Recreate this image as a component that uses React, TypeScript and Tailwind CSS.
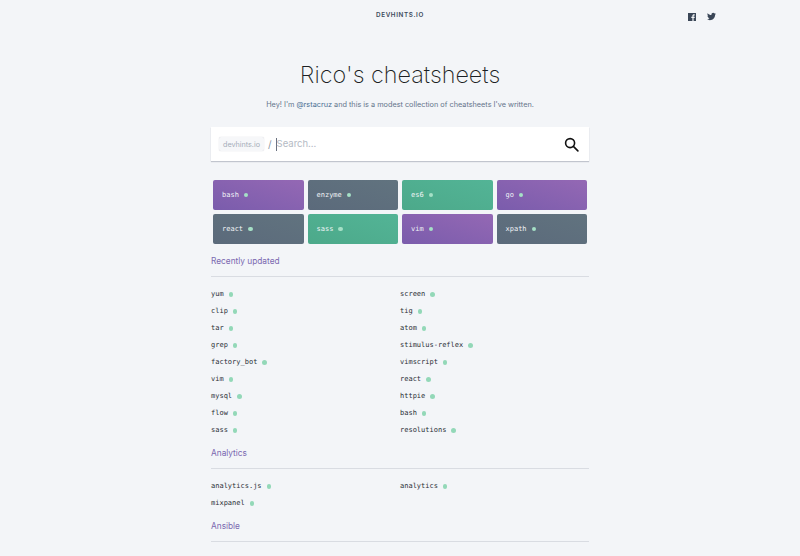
import { FaTwitter } from "react-icons/fa";

const inter = "font-['Inter',sans-serif]";
const mono = "font-['DejaVu_Sans_Mono',monospace]";

const tiles: [string, string][] = [
  ["bash", "bg-gradient-to-tr from-[#7a5cac] to-[#9468b4]"],
  ["enzyme", "bg-gradient-to-tr from-[#5b6a7b] to-[#61737f]"],
  ["es6", "bg-gradient-to-tr from-[#4ca98a] to-[#53b496]"],
  ["go", "bg-gradient-to-tr from-[#7a5cac] to-[#9468b4]"],
  ["react", "bg-gradient-to-tr from-[#5b6a7b] to-[#61737f]"],
  ["sass", "bg-gradient-to-tr from-[#4ca98a] to-[#53b496]"],
  ["vim", "bg-gradient-to-tr from-[#7a5cac] to-[#9468b4]"],
  ["xpath", "bg-gradient-to-tr from-[#5b6a7b] to-[#61737f]"],
];

const recent = [
  "yum", "screen", "clip", "tig", "tar", "atom", "grep", "stimulus-reflex",
  "factory_bot", "vimscript", "vim", "react", "mysql", "httpie", "flow", "bash",
  "sass", "resolutions",
];

function Item({ name }: { name: string }) {
  return (
    <div className={`flex h-[17px] items-center gap-[5px] text-[7px] text-[#2a2e35] ${mono}`}>
      <span>{name}</span>
      <span className="size-[4.5px] rounded-full bg-[#93d8b8]" />
    </div>
  );
}

function Section({ title, items, mt }: { title: string; items: string[]; mt: string }) {
  return (
    <section className={mt}>
      <h2 className={`h-[15px] text-[8.3px] leading-[15px] text-[#7a68b0] ${inter}`}>{title}</h2>
      <div className="mt-[7px] h-px bg-[#d9dce2]" />
      {items.length > 0 && (
        <div className="mt-[9px] grid grid-cols-2">
          {items.map((n, i) => (
            <Item key={i} name={n} />
          ))}
        </div>
      )}
    </section>
  );
}

export default function App() {
  return (
    <div className={`relative h-[556px] w-[800px] overflow-hidden bg-[#f3f5f8] ${inter}`}>
      <header className="relative flex h-[32px] items-center justify-center">
        <span className="text-[6.3px] font-semibold tracking-[0.1em] text-[#3d4a5c]">DEVHINTS.IO</span>
        <div className="absolute left-[688px] top-[12px] flex items-center gap-[11px] text-[#3a4657]">
          <svg className="size-[8px]" viewBox="0 0 8 8">
            <path fill="currentColor" d="M0 0h8v8H5.6V5h1l.15-1.2H5.6V3c0-.35.1-.55.55-.55h.65V1.4c-.15 0-.5-.05-.9-.05-.9 0-1.5.55-1.5 1.5v.95H3.3V5h1.1v3H0z" />
          </svg>
          <FaTwitter className="size-[9px]" />
        </div>
      </header>

      <h1 className="mt-[25px] text-center text-[23.4px] font-extralight leading-[36px] text-[#1c1f24]">
        Rico's cheatsheets
      </h1>
      <p className="mt-[5px] text-center text-[7.3px] leading-[14px] text-[#64748b]">
        Hey! I'm <span className="text-[#4a6f94]">@rstacruz</span> and this is a modest collection of cheatsheets I've written.
      </p>

      <main className="mx-auto mt-[15px] w-[378px]">
        <div className="flex h-[34px] items-center bg-white pl-[8px] pr-[10px] shadow-[0_1px_1px_rgba(100,110,130,0.35)]">
          <span className="rounded-[2px] bg-[#f6f7f9] px-[4px] py-[1.5px] text-[7.2px] leading-[11px] text-[#a4acb8] shadow-[0_0_1px_rgba(100,110,130,0.35)]">
            devhints.io
          </span>
          <span className="ml-[4px] text-[10px] text-[#8d96a3]">/</span>
          <span className="ml-[4px] h-[13px] w-px bg-[#6b7280]" />
          <span className="text-[9.5px] text-[#b4bac4]">Search...</span>
          <svg className="ml-auto size-[15px]" viewBox="0 0 16 16" fill="none" stroke="#111" strokeWidth="1.7" strokeLinecap="round">
            <circle cx="6.5" cy="6.5" r="4.8" />
            <path d="M10 10l4.8 4.8" />
          </svg>
        </div>

        <div className="mx-[2px] mt-[19px] grid grid-cols-4 gap-x-[4px] gap-y-[4px]">
          {tiles.map(([name, cls]) => (
            <div key={name} className={`flex h-[30px] items-center gap-[5px] rounded-[2px] pl-[9px] text-[7px] text-[#f1f4f7] ${mono} ${cls}`}>
              <span>{name}</span>
              <span className="size-[4.5px] rounded-full bg-[#a5e0c6]" />
            </div>
          ))}
        </div>

        <Section title="Recently updated" items={recent} mt="mt-[10px]" />
        <Section title="Analytics" items={["analytics.js", "analytics", "mixpanel"]} mt="mt-[7px]" />
        <Section title="Ansible" items={[]} mt="mt-[7px]" />
      </main>
    </div>
  );
}
